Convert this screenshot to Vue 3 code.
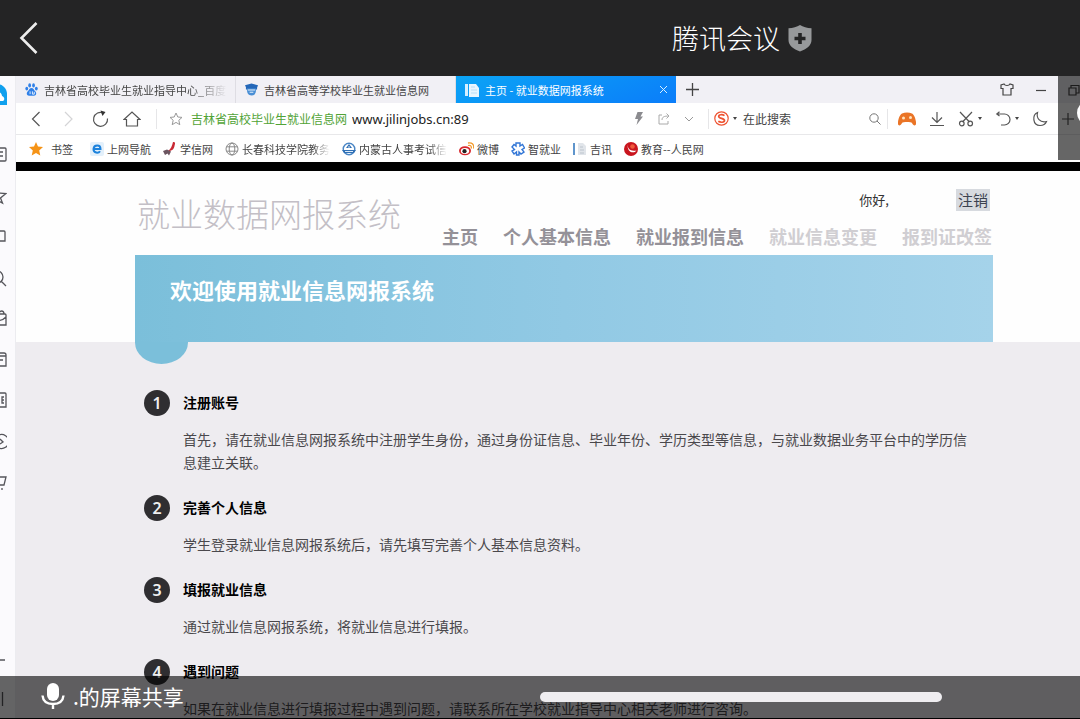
<template>
  <div class="meeting">
    <header class="meeting-bar">
      <button class="back-btn" type="button" aria-label="返回">
        <svg width="20" height="34" viewBox="0 0 20 34"><path d="M17.500 2 2.500 17l15 15" fill="none" stroke="#ededed" stroke-width="2.600" /></svg>
      </button>
      <h1 class="meeting-title">腾讯会议</h1>
      <svg width="24" height="28" viewBox="0 0 24 28">
        <path d="M12 1c3 2 7 3 11.500 3.200V16c0 5.500-5 9-11.500 11.500C5.500 25 .5 21.500.5 16V4.200C5 4 9 3 12 1Z" fill="#97999b" />
        <path d="M12 9v11M6.500 14.500h11" stroke="#242425" stroke-width="3.600" />
      </svg>
    </header>

    <div class="shared">
      <aside class="side">
        <div class="side-logo">
          <svg width="22" height="22" viewBox="0 0 22 22">
            <path d="M0 0h12c6 0 10 5 10 10v11H0Z" fill="#11a0ee" />
            <path d="M0 16c1-5 5-9 10-9 5 0 7 3 7 5 3 1 3 5 0 5H0Z" fill="#fff" />
          </svg>
        </div>
        <button v-for="item in sideItems" :key="item.label" class="side-btn" type="button" :aria-label="item.label">
          <svg width="20" height="20" viewBox="0 0 20 20"><path :d="item.path" /></svg>
        </button>
        <div class="side-foot">
          <svg width="20" height="60" viewBox="0 0 20 60"><path d="M6 11h12M15.500 43v14" /></svg>
        </div>
      </aside>

      <main class="browser">
        <div class="tabs">
          <button class="tab" type="button">
            <svg width="13" height="13" viewBox="0 0 14 14" fill="#2f80e8">
              <ellipse cx="5" cy="2.600" rx="1.500" ry="2.200" /><ellipse cx="9.200" cy="2.600" rx="1.500" ry="2.200" />
              <ellipse cx="1.900" cy="6" rx="1.500" ry="2" /><ellipse cx="12.200" cy="6" rx="1.500" ry="2" />
              <path d="M7 5.500c2 0 2.500 2 4 3.500 2 2 1 5-1.500 4.800-1.500-.2-3.500-.2-5 0C2 14 1 11 3 9c1.500-1.500 2-3.500 4-3.500Z" />
              <path d="M5.500 9v3M8 9v3h2V9.500" stroke="#fff" stroke-width=".9" fill="none" />
            </svg>
            <span class="tab-text fade">吉林省高校毕业生就业指导中心_百度</span>
          </button>
          <button class="tab" type="button">
            <svg width="13" height="13" viewBox="0 0 14 14">
              <path d="M0 2.500 7 .5l7 2-1 2.500v2H1V4.500Z" fill="#2467b8" />
              <path d="M2 6c0 5 1.500 7.500 5 7.500S12 11 12 6Z" fill="#4a8fd5" />
              <path d="M3 7.500h8M5 10h4" stroke="#e4effa" stroke-width="1.200" />
            </svg>
            <span class="tab-text">吉林省高等学校毕业生就业信息网</span>
          </button>
          <button class="tab active" type="button">
            <svg width="14" height="14" viewBox="0 0 14 14">
              <path d="M0 1h3v12H0Z" fill="#d6efff" /><path d="M4 1h7l3 4v9H4Z" fill="#e9f6ff" />
              <path d="M6 4h4M6 7h6M6 10h6" stroke="#b9def7" />
            </svg>
            <span class="tab-text">主页 - 就业数据网报系统</span>
            <svg width="9" height="9" viewBox="0 0 9 9"><path d="m1 1 7 7M8 1 1 8" stroke="#d8efff" /></svg>
          </button>
          <button class="new-tab" type="button" aria-label="新建标签页">
            <svg width="13" height="13" viewBox="0 0 13 13"><path d="M6.500 0v13M0 6.500h13" stroke="#444" stroke-width="1.300" /></svg>
          </button>
          <div class="window-btns">
            <button type="button" aria-label="皮肤">
              <svg width="14" height="13" viewBox="0 0 14 13"><path d="M4 1 1 2v3.500h2V12h8V5.500h2V2l-3-1c-1 2-5 2-6 0Z" /></svg>
            </button>
            <button type="button" aria-label="最小化">
              <svg width="10" height="12" viewBox="0 0 10 12"><path d="M0 6.500h10" /></svg>
            </button>
            <button type="button" aria-label="还原">
              <svg width="12" height="12" viewBox="0 0 12 12"><path d="M1 4h7v7H1ZM3 4V1.500h8V9H8" /></svg>
            </button>
          </div>
        </div>

        <div class="toolbar">
          <button class="nav-btn" type="button" aria-label="后退">
            <svg width="16" height="18" viewBox="0 0 16 18"><path d="m11.500 2-7 7 7 7" /></svg>
          </button>
          <button class="nav-btn off" type="button" aria-label="前进">
            <svg width="16" height="18" viewBox="0 0 16 18"><path d="m5 2 7 7-7 7" /></svg>
          </button>
          <button class="nav-btn" type="button" aria-label="刷新">
            <svg width="18" height="18" viewBox="0 0 18 18"><path d="M12.500 3A7 7 0 1 0 16.500 8.500" /><path d="m9.500.5 5 1.500-3 4Z" class="solid" /></svg>
          </button>
          <button class="nav-btn" type="button" aria-label="主页">
            <svg width="18" height="18" viewBox="0 0 18 18"><path d="M1 9.500 9 2l8 7.500h-2.500V16h-11V9.500Z" /></svg>
          </button>
          <form class="address" @submit.prevent>
            <svg width="14" height="14" viewBox="0 0 14 14"><path d="m7 1 1.800 4 4.200.4-3.200 2.900 1 4.400L7 10.400l-3.800 2.300 1-4.400L1 5.400 5.200 5Z" fill="none" stroke="#999" /></svg>
            <label class="site-name" for="url">吉林省高校毕业生就业信息网</label>
            <input id="url" v-model="url" class="url-input" type="text" />
            <button class="small-btn" type="button" aria-label="极速模式">
              <svg width="10" height="13" viewBox="0 0 10 13"><path d="M3.500 0H9L6.500 4.500H9L2.500 13l1.500-6H1Z" fill="#8b8b8f" /></svg>
            </button>
            <button class="small-btn" type="button" aria-label="分享">
              <svg width="12" height="12" viewBox="0 0 12 12"><path d="M4 2H1v9h9V8M4 7c0-3 2-4 7-4M8.500.5 11 3 8.500 5.500" fill="none" stroke="#aaa" /></svg>
            </button>
            <button class="small-btn" type="button" aria-label="展开">
              <svg width="10" height="8" viewBox="0 0 10 8"><path d="m1 2 4 4 4-4" fill="none" stroke="#999" /></svg>
            </button>
          </form>
          <form class="search" @submit.prevent>
            <svg width="15" height="15" viewBox="0 0 15 15">
              <circle cx="7.500" cy="7.500" r="6.700" fill="#fff" stroke="#ee5230" stroke-width="1.200" />
              <path d="M10.500 4.600C8.500 3.200 4.700 3.400 4.700 5.500c0 2.300 5.800 1.400 5.800 4 0 2.200-4.200 2.200-6.200.8" fill="none" stroke="#ee5230" stroke-width="1.700" />
            </svg>
            <i class="caret"></i>
            <input v-model="keyword" class="search-input" type="text" placeholder="在此搜索" aria-label="在此搜索" />
            <button class="small-btn" type="submit" aria-label="搜索">
              <svg width="12" height="12" viewBox="0 0 12 12"><circle cx="5" cy="5" r="4.200" fill="none" stroke="#777" /><path d="m8 8 3.500 3.500" stroke="#777" /></svg>
            </button>
          </form>
          <div class="tools">
            <button class="tool game" type="button" aria-label="游戏">
              <svg width="18" height="14" viewBox="0 0 18 14">
                <path d="M4 1.500c3-1.500 7-1.500 10 0 2.500 1 4.500 8 4 10.500-.5 2.500-3 1.500-4-1-.6-1.300-9.400-1.300-10 0-1 2.500-3.500 3.500-4 1C-.5 9.500 1.500 2.500 4 1.500Z" fill="#ea7426" />
                <circle cx="5.500" cy="6" r="1.500" fill="#ffe3bd" /><circle cx="12.500" cy="5.500" r="1.500" fill="#ffe3bd" />
              </svg>
            </button>
            <button class="tool" type="button" aria-label="下载">
              <svg width="16" height="16" viewBox="0 0 16 16"><path d="M8 1v10M3 6.500l5 5 5-5M1 14.500h14" /></svg>
            </button>
            <button class="tool" type="button" aria-label="截图">
              <svg width="16" height="16" viewBox="0 0 16 16"><path d="m2 1 9.500 10M14 1 4.500 11" /><circle cx="3.800" cy="12.500" r="2.300" /><circle cx="12.200" cy="12.500" r="2.300" /></svg>
              <i class="caret"></i>
            </button>
            <button class="tool" type="button" aria-label="恢复">
              <svg width="16" height="16" viewBox="0 0 16 16"><path d="M2 3h7.500a5.500 5.500 0 0 1 0 11H6M4.500.8 1.800 3l2.700 2" /></svg>
              <i class="caret"></i>
            </button>
            <button class="tool" type="button" aria-label="夜间模式">
              <svg width="16" height="16" viewBox="0 0 16 16"><path d="M5.500 1.500C0 4 .5 14.500 8 14.500c3 0 5.500-1.500 6.500-4C8 12 4 7 5.500 1.500Z" /></svg>
            </button>
            <button class="tool" type="button" aria-label="添加">
              <svg width="14" height="14" viewBox="0 0 14 14"><path d="M7 1v12M1 7h12" /></svg>
            </button>
          </div>
        </div>

        <nav class="bookmarks">
          <a href="#" class="bookmark first">
            <svg width="14" height="14" viewBox="0 0 14 14"><path d="m7 0 2 4.600 5 .5-3.800 3.300 1.100 5L7 10.900l-4.300 2.500 1.100-5L0 5.100l5-.5Z" fill="#f59316" /></svg>
            <span>书签</span>
          </a>
          <a href="#" class="bookmark">
            <svg width="14" height="14" viewBox="0 0 14 14"><rect width="14" height="14" rx="2" fill="#e3f0fb" /><path d="M3.500 7h7C10.500 2.500 4 2.400 3.500 7c0 4.200 5 4.500 6.500 2.200" fill="none" stroke="#1c82dc" stroke-width="2" /></svg>
            <span>上网导航</span>
          </a>
          <a href="#" class="bookmark">
            <svg width="14" height="14" viewBox="0 0 14 14"><path d="M10 0c3 0 2 2 1.500 4C11 7 9 9 5 9c3-2 4-5 5-9Z" fill="#c92a35" /><path d="m0 9 4-1.500 4 2-2 4-1.500-2L2 13Z" fill="#6b5560" /></svg>
            <span>学信网</span>
          </a>
          <a href="#" class="bookmark">
            <svg width="14" height="14" viewBox="0 0 14 14" fill="none" stroke="#888"><circle cx="7" cy="7" r="6" /><ellipse cx="7" cy="7" rx="2.800" ry="6" /><path d="M1.500 4.800h11M1.500 9.200h11" /></svg>
            <span class="fade">长春科技学院教务</span>
          </a>
          <a href="#" class="bookmark">
            <svg width="14" height="14" viewBox="0 0 14 14"><circle cx="7" cy="7" r="5.800" fill="none" stroke="#4a86c5" stroke-width="1.400" /><path d="M7 2 4 6h6ZM0 8h14l-2 3H2Z" fill="#2f6fb5" /><path d="M3 9.500h8M7 4v2" stroke="#dcebf8" /></svg>
            <span class="fade">内蒙古人事考试信</span>
          </a>
          <a href="#" class="bookmark">
            <svg width="15" height="14" viewBox="0 0 15 14">
              <ellipse cx="6" cy="8.800" rx="6" ry="4.500" fill="#d8262c" /><ellipse cx="6" cy="9" rx="4.200" ry="3" fill="#fff" />
              <circle cx="5.500" cy="9.200" r="2.100" fill="#222" /><path d="M9 3.500c2.500-.8 3.800.8 3.200 3M9 1c4-1 6.500 2 5.500 5.500" fill="none" stroke="#f39a2b" stroke-width="1.300" />
            </svg>
            <span>微博</span>
          </a>
          <a href="#" class="bookmark">
            <svg width="14" height="14" viewBox="0 0 14 14" fill="none" stroke="#3276d6" stroke-width="1.400"><path d="M5 4V1h4v3l2.500-1.500 2 3.500L11 7.500 13 10l-3 2-2-2v3H5.500v-3L3 12 1 9l2.500-1.500L1 5l2-2.500Z" /></svg>
            <span>智就业</span>
          </a>
          <a href="#" class="bookmark">
            <svg width="14" height="14" viewBox="0 0 14 14"><path d="M0 1h2v12H0Z" fill="#5f95cc" /><path d="M5 1h5l3 3v9H5Z" fill="#e1e5ea" /><path d="M7 5h3M7 8h4M7 11h4" stroke="#bcc4cd" /></svg>
            <span>吉讯</span>
          </a>
          <a href="#" class="bookmark">
            <svg width="14" height="14" viewBox="0 0 14 14"><circle cx="7" cy="7" r="7" fill="#c9151e" /><path d="M3.500 2c0 5 3 7.500 9 6.500C10 12 3 11 3.500 2Z" fill="#fff" /><circle cx="8.500" cy="4.500" r="2.300" fill="#f05a3c" /></svg>
            <span>教育--人民网</span>
          </a>
        </nav>

        <div class="page">
          <header class="page-head">
            <h2 class="site-title">就业数据网报系统</h2>
            <div class="head-right">
              <div class="user-row">
                <span>你好,</span>
                <button class="logout" type="button">注销</button>
              </div>
              <nav class="menu">
                <a v-for="m in menu" :key="m.text" href="#" :class="{ disabled: m.disabled }">{{ m.text }}</a>
              </nav>
            </div>
          </header>
          <div class="banner-wrap">
            <h3 class="banner">欢迎使用就业信息网报系统</h3>
          </div>
          <section class="guide">
            <div class="banner-tail"></div>
            <ol class="steps">
              <li v-for="(step, i) in steps" :key="step.title" class="step">
                <span class="step-num">{{ i + 1 }}</span>
                <div class="step-body">
                  <h4>{{ step.title }}</h4>
                  <p>{{ step.text }}</p>
                </div>
              </li>
            </ol>
          </section>
        </div>
      </main>

      <div class="float-panel"><span class="float-handle"></span></div>
    </div>

    <footer class="share-bar">
      <svg width="24" height="28" viewBox="0 0 24 28">
        <rect x="6" y="1" width="12" height="18" rx="6" fill="#fff" />
        <path d="M1.500 13.500C2 19 6 22 12 22s10-3 10.500-8.500M12 22v5" fill="none" stroke="#fff" stroke-width="2.400" />
      </svg>
      <span>.的屏幕共享</span>
      <i class="home-indicator"></i>
    </footer>
  </div>
</template>

<script setup>
import { ref } from 'vue';

const url = ref('www.jilinjobs.cn:89');
const keyword = ref('');

const menu = [
  { text: '主页' },
  { text: '个人基本信息' },
  { text: '就业报到信息' },
  { text: '就业信息变更', disabled: true },
  { text: '报到证改签', disabled: true }
];

const steps = [
  {
    title: '注册账号',
    text: '首先，请在就业信息网报系统中注册学生身份，通过身份证信息、毕业年份、学历类型等信息，与就业数据业务平台中的学历信息建立关联。'
  },
  {
    title: '完善个人信息',
    text: '学生登录就业信息网报系统后，请先填写完善个人基本信息资料。'
  },
  {
    title: '填报就业信息',
    text: '通过就业信息网报系统，将就业信息进行填报。'
  },
  {
    title: '遇到问题',
    text: '如果在就业信息进行填报过程中遇到问题，请联系所在学校就业指导中心相关老师进行咨询。'
  }
];

const sideItems = [
  { label: '资讯', path: 'M5 4h13a1 1 0 0 1 1 1v11a1 1 0 0 1-1 1H5M5 8h11M5 12h11' },
  { label: '收藏', path: 'm10 3 2 5 7 .5-5.500 4.500 2 5-5.500-3' },
  { label: '窗口', path: 'M4 5h13a1 1 0 0 1 1 1v9H4' },
  { label: '搜索', path: 'M10 4a6 6 0 1 1 0 12 6 6 0 0 1 0-12ZM14 14l5 5' },
  { label: '购物', path: 'M4 6h14a1 1 0 0 1 1 1v10H4M12 6c0-4 5-4 5 0M8 9c2 5 7 4 11 0' },
  { label: '日历', path: 'M4 4h13a2 2 0 0 1 2 2v11H4M4 7h15M10 11h6' },
  { label: '笔记', path: 'M4 3h14a1 1 0 0 1 1 1v13H4M17 7h-2v6h2M15 10h2' },
  { label: '播放', path: 'M12 4a7 7 0 1 1 0 13 7 7 0 0 1 0-13ZM13 8l3 3-3 2' },
  { label: '购物车', path: 'M5 5h14l-2 8H8M15 16v2' }
];
</script>

<style>
body {
  margin: 0;
  background: #000;
}
</style>

<style scoped>
.meeting {
  position: relative;
  display: flex;
  flex-direction: column;
  height: 100vh;
  overflow: hidden;
  font-family: "Noto Sans CJK SC", "Noto Sans", sans-serif;
  color: #333;
}

h1,
h2,
h3,
h4,
p,
ol {
  margin: 0;
  padding: 0;
}

svg {
  display: block;
  flex: none;
}

button,
input {
  font-family: inherit;
  border: none;
  background: none;
  padding: 0;
}

button {
  cursor: pointer;
}

input {
  min-width: 0;
  outline: none;
}

a {
  color: inherit;
  text-decoration: none;
}

/* top bar */
.meeting-bar {
  flex: none;
  display: grid;
  grid-template-columns: 1fr auto 24px 260px;
  column-gap: 8px;
  align-items: center;
  height: 76px;
  box-sizing: border-box;
  background: #242425;
}

.back-btn {
  justify-self: start;
  margin-left: 19px;
}

.meeting-title {
  color: #fff;
  font-size: 27px;
  line-height: 40px;
  font-weight: 300;
}

.shared {
  position: relative;
  flex: 1;
  min-height: 0;
  display: flex;
  background: #fff;
}

/* left strip */
.side {
  flex: none;
  width: 16px;
  box-sizing: border-box;
  padding-right: 8px;
  border-right: 1px solid #ececf0;
  background: #fbfafd;
  display: flex;
  flex-direction: column;
  align-items: flex-end;
  overflow: hidden;
}

.side-logo {
  flex: none;
  height: 49px;
  padding-top: 8px;
}

.side-btn {
  flex: none;
  height: 41px;
  display: flex;
  align-items: center;
}

.side-btn svg,
.side-foot svg {
  fill: none;
  stroke: #55555b;
  stroke-width: 1.3;
}

.side-foot {
  margin-top: auto;
  height: 70px;
}

.browser {
  flex: 1;
  min-width: 0;
  display: flex;
  flex-direction: column;
}

/* tabs */
.tabs {
  flex: none;
  display: flex;
  height: 27px;
  background: #f1f0f5;
}

.tab {
  flex: 0 1 220px;
  min-width: 0;
  box-sizing: border-box;
  display: flex;
  align-items: center;
  gap: 6px;
  padding: 0 8px 0 9px;
  border-right: 1px solid #dedde3;
  font-size: 11px;
  color: #444;
  text-align: left;
}

.tab.active {
  border-right: none;
  background: linear-gradient(160deg, #0ba4f5, #0b7dfa);
  color: #fff;
}

.tab-text {
  flex: 1;
  white-space: nowrap;
}

.fade {
  white-space: nowrap;
  mask-image: linear-gradient(to right, #000 80%, transparent);
}

.new-tab {
  width: 32px;
  display: flex;
  align-items: center;
  justify-content: center;
}

.window-btns {
  margin-left: auto;
  display: flex;
  gap: 22px;
}

.window-btns svg {
  fill: none;
  stroke: #444;
  stroke-width: 1.2;
}

/* toolbar */
.toolbar {
  flex: none;
  display: flex;
  align-items: center;
  height: 32px;
  box-sizing: border-box;
  padding-left: 4px;
  border-bottom: 1px solid #e8e8ea;
  background: #fff;
}

.nav-btn {
  width: 32px;
  display: flex;
  justify-content: center;
}

.nav-btn svg,
.tool svg {
  fill: none;
  stroke: #555;
  stroke-width: 1.2;
}

.nav-btn .solid {
  fill: #333;
  stroke: none;
}

.nav-btn.off svg {
  stroke: #d4d4d6;
}

.tool.game svg {
  stroke: none;
}

.address {
  flex: 1;
  min-width: 0;
  display: flex;
  align-items: center;
  height: 20px;
  margin-left: 8px;
  padding: 0 7px 0 12px;
  border-left: 1px solid #e6e6e8;
}

.site-name {
  margin: 0 5px 0 8px;
  font-size: 12px;
  line-height: 20px;
  color: #51a336;
  white-space: nowrap;
}

.url-input {
  flex: 1;
  font-family: "Noto Sans", sans-serif;
  font-size: 13px;
  color: #222;
}

.small-btn {
  width: 25px;
  flex: none;
  display: flex;
  justify-content: center;
}

.search {
  display: flex;
  align-items: center;
  width: 180px;
  height: 20px;
  box-sizing: border-box;
  border-left: 1px solid #e6e6e8;
  border-right: 1px solid #e6e6e8;
  padding-left: 5px;
}

.caret {
  flex: none;
  width: 0;
  border: 2px solid transparent;
  border-top: 3px solid #444;
  border-bottom: none;
  margin-left: 4px;
}

.search-input {
  flex: 1;
  margin-left: 6px;
  font-size: 12px;
}

.search-input::placeholder {
  color: #444;
  opacity: 1;
}

.tools {
  flex: none;
  width: 192px;
  box-sizing: border-box;
  padding-left: 10px;
  display: flex;
  align-items: center;
  gap: 13px;
  overflow: hidden;
}

.tool {
  flex: none;
  display: flex;
  align-items: center;
}

/* bookmarks */
.bookmarks {
  flex: none;
  display: flex;
  align-items: center;
  gap: 12px;
  height: 36px;
  box-sizing: border-box;
  padding-left: 13px;
  border-bottom: 9px solid #000;
  background: #fff;
  font-size: 11px;
  line-height: 16px;
  color: #444;
  white-space: nowrap;
}

.bookmark {
  display: flex;
  align-items: center;
  gap: 3px;
}

.bookmark.first {
  gap: 8px;
  margin-right: 5px;
}

/* web page */
.page {
  flex: 1;
  display: flex;
  flex-direction: column;
  background: #fefefe;
}

.page-head {
  flex: none;
  display: flex;
  justify-content: space-between;
  height: 84px;
  padding: 0 88px 0 121px;
}

.site-title {
  margin-top: 18px;
  font-size: 33px;
  line-height: 48px;
  font-weight: 300;
  color: #c3bfc6;
  white-space: nowrap;
}

.head-right {
  display: flex;
  flex-direction: column;
  align-items: flex-end;
  padding-top: 18px;
}

.user-row {
  display: flex;
  align-items: center;
  gap: 67px;
  font-size: 13px;
  line-height: 22px;
}

.logout {
  padding: 0 2px;
  margin-right: 2px;
  background: #d7dadf;
  color: #3c4250;
  font-size: 15px;
  line-height: 22px;
}

.menu {
  display: flex;
  gap: 25px;
  margin-top: 12px;
  font-size: 18px;
  line-height: 26px;
  font-weight: 700;
  color: #949198;
  white-space: nowrap;
}

.menu .disabled {
  color: #d0ced2;
}

.banner-wrap {
  flex: none;
  padding: 0 87px 0 119px;
}

.banner {
  height: 87px;
  box-sizing: border-box;
  padding: 18px 35px;
  background: linear-gradient(to right, #7bbfda, #91c9e4 50%, #a5d3ea);
  color: #fff;
  font-size: 22px;
  line-height: 32px;
  font-weight: 700;
}

.guide {
  flex: 1;
  padding: 0 87px 0 119px;
  background: #eeecf0;
}

.banner-tail {
  width: 53px;
  height: 22px;
  border-radius: 0 0 27px 27px / 0 0 22px 22px;
  background: #7bbfda;
}

.steps {
  list-style: none;
  padding: 26px 14px 0 9px;
}

.step {
  display: flex;
  gap: 13px;
  margin-bottom: 21px;
}

.step-num {
  flex: none;
  width: 26px;
  height: 26px;
  border-radius: 50%;
  background: #2f2e31;
  color: #eee;
  font-family: "Noto Sans", sans-serif;
  font-size: 16px;
  line-height: 26px;
  font-weight: 600;
  text-align: center;
}

.step-body h4 {
  font-size: 14px;
  line-height: 24px;
  font-weight: 700;
  color: #000;
}

.step-body p {
  margin-top: 14px;
  font-size: 14px;
  line-height: 23px;
  color: #4a484c;
}

/* overlays of the meeting app */
.float-panel {
  position: absolute;
  top: 0;
  right: 0;
  width: 22px;
  height: 84px;
  background: rgba(0, 0, 0, 0.6);
  overflow: hidden;
}

.float-handle {
  position: absolute;
  top: 24px;
  left: 19px;
  width: 26px;
  height: 26px;
  border-radius: 50%;
  background: #fff;
}

.share-bar {
  position: absolute;
  left: 0;
  right: 0;
  bottom: 0;
  height: 43px;
  box-sizing: border-box;
  padding: 0 0 2px 41px;
  border-bottom: 1px solid #000;
  background: rgba(0, 0, 0, 0.6);
  display: flex;
  align-items: center;
  gap: 8px;
  color: #fff;
  font-size: 21px;
  line-height: 30px;
}

.home-indicator {
  position: absolute;
  left: 50%;
  top: 16px;
  width: 402px;
  height: 10px;
  border-radius: 5px;
  background: #efedf0;
}
</style>
